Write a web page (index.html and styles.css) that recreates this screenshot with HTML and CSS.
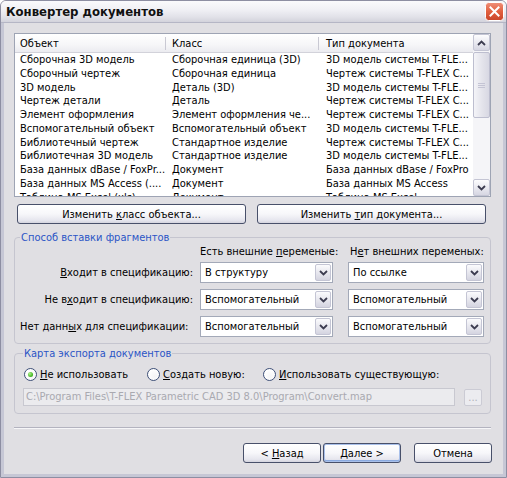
FILE: index.html
```html
<!DOCTYPE html>
<html lang="ru">
<head>
<meta charset="utf-8">
<title>Конвертер документов</title>
<link rel="stylesheet" href="styles.css">
</head>
<body>
<div class="window">
  <div class="titlebar">
    <span class="title">Конвертер документов</span>
    <span class="close">
      <svg width="19" height="19" viewBox="0 0 19 19">
        <defs>
          <linearGradient id="rg" x1="0" y1="0" x2="0" y2="1">
            <stop offset="0" stop-color="#f0907a"/>
            <stop offset="0.5" stop-color="#e2603f"/>
            <stop offset="1" stop-color="#c9452a"/>
          </linearGradient>
        </defs>
        <rect x="0.5" y="0.5" width="18" height="18" rx="3" fill="url(#rg)" stroke="#ffffff"/>
        <path d="M5.5 5.5 L13.5 13.5 M13.5 5.5 L5.5 13.5" stroke="#ffffff" stroke-width="2" stroke-linecap="square"/>
      </svg>
    </span>
  </div>
  <div class="client">
    <div class="listview">
      <div class="lv-main">
        <div class="lv-header">
          <div class="col c1">Объект</div>
          <div class="col c2">Класс</div>
          <div class="col c3">Тип документа</div>
        </div>
        <div class="lv-body">
          <div class="row"><div class="c1">Сборочная 3D модель</div><div class="c2">Сборочная единица (3D)</div><div class="c3">3D модель системы T-FLE...</div></div>
          <div class="row"><div class="c1">Сборочный чертеж</div><div class="c2">Сборочная единица</div><div class="c3">Чертеж системы T-FLEX C...</div></div>
          <div class="row"><div class="c1">3D модель</div><div class="c2">Деталь (3D)</div><div class="c3">3D модель системы T-FLE...</div></div>
          <div class="row"><div class="c1">Чертеж детали</div><div class="c2">Деталь</div><div class="c3">Чертеж системы T-FLEX C...</div></div>
          <div class="row"><div class="c1">Элемент оформления</div><div class="c2">Элемент оформления че...</div><div class="c3">Чертеж системы T-FLEX C...</div></div>
          <div class="row"><div class="c1">Вспомогательный объект</div><div class="c2">Вспомогательный объект</div><div class="c3">3D модель системы T-FLE...</div></div>
          <div class="row"><div class="c1">Библиотечный чертеж</div><div class="c2">Стандартное изделие</div><div class="c3">Чертеж системы T-FLEX C...</div></div>
          <div class="row"><div class="c1">Библиотечная 3D модель</div><div class="c2">Стандартное изделие</div><div class="c3">3D модель системы T-FLE...</div></div>
          <div class="row"><div class="c1">База данных dBase / FoxPr...</div><div class="c2">Документ</div><div class="c3">База данных dBase / FoxPro</div></div>
          <div class="row"><div class="c1">База данных MS Access (....</div><div class="c2">Документ</div><div class="c3">База данных MS Access</div></div>
          <div class="row"><div class="c1">Таблица MS Excel (xls)</div><div class="c2">Документ</div><div class="c3">Таблица MS Excel</div></div>
        </div>
      </div>
      <div class="vscroll">
        <div class="sb-btn"><svg width="9" height="6" viewBox="0 0 9 6"><path d="M1 5 L4.5 1.5 L8 5" fill="none" stroke="#3c3c50" stroke-width="1.8"/></svg></div>
        <div class="sb-track">
          <div class="sb-thumb">
            <svg width="7" height="7" viewBox="0 0 7 7"><path d="M0 1.5 H7 M0 3.5 H7 M0 5.5 H7" stroke="#c4c4d4" stroke-width="1"/></svg>
          </div>
        </div>
        <div class="sb-btn"><svg width="9" height="6" viewBox="0 0 9 6"><path d="M1 1 L4.5 4.5 L8 1" fill="none" stroke="#3c3c50" stroke-width="1.8"/></svg></div>
      </div>
    </div>

    <div class="btnrow">
      <button class="btn wide">Изменить <u>к</u>ласс объекта...</button>
      <button class="btn wide">Изменить <u>т</u>ип документа...</button>
    </div>

    <fieldset class="group g1">
      <legend>Способ вставки фрагментов</legend>
      <div class="colheads">
        <span class="ch1">Есть внешние <u>п</u>еременые:</span>
        <span class="ch2">Н<u>е</u>т внешних переменых:</span>
      </div>
      <div class="ins-grid">
        <div class="lbl"><u>В</u>ходит в спецификацию:</div>
        <div class="combo cb1"><span class="val">В структуру</span><span class="arrow"><svg width="9" height="6" viewBox="0 0 9 6"><path d="M1 1 L4.5 4.5 L8 1" fill="none" stroke="#3c3c50" stroke-width="1.8"/></svg></span></div>
        <div class="combo cb2"><span class="val">По ссылке</span><span class="arrow"><svg width="9" height="6" viewBox="0 0 9 6"><path d="M1 1 L4.5 4.5 L8 1" fill="none" stroke="#3c3c50" stroke-width="1.8"/></svg></span></div>

        <div class="lbl">Не в<u>х</u>одит в спецификацию:</div>
        <div class="combo cb1"><span class="val">Вспомогательный</span><span class="arrow"><svg width="9" height="6" viewBox="0 0 9 6"><path d="M1 1 L4.5 4.5 L8 1" fill="none" stroke="#3c3c50" stroke-width="1.8"/></svg></span></div>
        <div class="combo cb2"><span class="val">Вспомогательный</span><span class="arrow"><svg width="9" height="6" viewBox="0 0 9 6"><path d="M1 1 L4.5 4.5 L8 1" fill="none" stroke="#3c3c50" stroke-width="1.8"/></svg></span></div>

        <div class="lbl left">Нет данн<u>ы</u>х для спецификации:</div>
        <div class="combo cb1"><span class="val">Вспомогательный</span><span class="arrow"><svg width="9" height="6" viewBox="0 0 9 6"><path d="M1 1 L4.5 4.5 L8 1" fill="none" stroke="#3c3c50" stroke-width="1.8"/></svg></span></div>
        <div class="combo cb2"><span class="val">Вспомогательный</span><span class="arrow"><svg width="9" height="6" viewBox="0 0 9 6"><path d="M1 1 L4.5 4.5 L8 1" fill="none" stroke="#3c3c50" stroke-width="1.8"/></svg></span></div>
      </div>
    </fieldset>

    <fieldset class="group g2">
      <legend>Карта экспорта документов</legend>
      <div class="radios">
        <label class="radio r1"><span class="dot on"></span><span><u>Н</u>е использовать</span></label>
        <label class="radio r2"><span class="dot"></span><span><u>С</u>оздать новую:</span></label>
        <label class="radio r3"><span class="dot"></span><span><u>И</u>спользовать существующую:</span></label>
      </div>
      <div class="path-row">
        <div class="path">C:\Program Files\T-FLEX Parametric CAD 3D 8.0\Program\Convert.map</div>
        <button class="browse" disabled>...</button>
      </div>
    </fieldset>

    <div class="sep"></div>

    <div class="footer">
      <button class="btn nav">&lt; <u>Н</u>азад</button>
      <button class="btn nav default"><u>Д</u>алее &gt;</button>
      <button class="btn nav cancel">Отмена</button>
    </div>
  </div>
</div>
</body>
</html>
```

FILE: styles.css
```css
* { box-sizing: border-box; }

html, body {
  margin: 0;
  padding: 0;
  background: #ffffff;
}

body {
  font-family: "DejaVu Sans Condensed", "DejaVu Sans", sans-serif;
  font-stretch: semi-condensed;
  font-size: 11px;
  color: #000000;
}

u { text-decoration: underline; text-underline-offset: 1px; }

.window {
  width: 507px;
  height: 478px;
  display: flex;
  flex-direction: column;
  background: #e0dfe3;
  border: 1px solid #8d8ea2;
  border-radius: 6px 6px 0 0;
  overflow: hidden;
}

.titlebar {
  height: 22px;
  flex: none;
  display: flex;
  align-items: center;
  justify-content: space-between;
  padding: 0 2px 0 5px;
  background: linear-gradient(#fafafc 0%, #efeff4 45%, #e2e2e9 75%, #d3d3dc 100%);
  border-bottom: 1px solid #b5b6c5;
}

.title {
  font-weight: bold;
  font-size: 13px;
  color: #111111;
}

.close {
  display: flex;
  width: 19px;
  height: 19px;
}

.client {
  flex: 1;
  display: flex;
  flex-direction: column;
  border: 3px solid #c6c7d5;
  border-top: 0;
  padding: 10px 12px 0 10px;
}

/* list view */
.listview {
  height: 164px;
  flex: none;
  display: flex;
  border: 1px solid #9ea4b4;
  background: #ffffff;
}

.lv-main {
  flex: 1;
  min-width: 0;
  display: flex;
  flex-direction: column;
  overflow: hidden;
}

.lv-header {
  flex: none;
  display: flex;
  height: 19px;
  padding: 3px 0 2px;
  background: linear-gradient(#ffffff, #f6f6f8 60%, #ebebf0);
  border-bottom: 1px solid #d2d2da;
}

.lv-header .col {
  height: 13px;
  line-height: 13px;
  border-right: 1px solid #c9c9d3;
}

.lv-header .c3 { border-right: 0; }

.c1 { width: 151px; padding-left: 5px; flex: none; }
.c2 { width: 153px; padding-left: 6px; flex: none; }
.c3 { flex: 1; padding-left: 7px; min-width: 0; }

.lv-body {
  flex: 1;
  overflow: hidden;
}

.row {
  display: flex;
  height: 13.75px;
  line-height: 13.75px;
  white-space: nowrap;
}

.row > div { overflow: hidden; }

.vscroll {
  width: 17px;
  flex: none;
  display: flex;
  flex-direction: column;
  background: #f5f5f8;
}

.sb-btn {
  height: 17px;
  flex: none;
  display: flex;
  align-items: center;
  justify-content: center;
  border: 1px solid #c4c5d4;
  border-radius: 2px;
  background: linear-gradient(#fdfdfe, #e6e6ee 60%, #d6d6e2);
}

.sb-track {
  flex: 1;
  padding: 1px 0;
}

.sb-thumb {
  height: 66px;
  display: flex;
  align-items: center;
  justify-content: center;
  border: 1px solid #bdbecf;
  border-radius: 2px;
  background: linear-gradient(90deg, #f4f4f8, #e2e2ea 60%, #d8d8e3);
}

/* buttons */
.btnrow {
  display: flex;
  gap: 11px;
  margin-top: 7px;
  padding: 0 5px 0 3px;
}

.btn {
  height: 20px;
  padding: 0;
  font: inherit;
  color: #000000;
  border: 1px solid #48506a;
  border-radius: 3px;
  background: linear-gradient(#ffffff 0%, #f7f7fa 50%, #e6e6ee 85%, #d4d4de 100%);
}

.btn.wide { flex: 1; }

/* group boxes */
.group {
  margin: 7px 0 0;
  padding: 1px 6px 6px 5px;
  border: 1px solid #c5c5cf;
  border-radius: 4px;
  min-width: 0;
}

.group legend {
  padding: 0 1px;
  margin-left: 0;
  color: #2b55c6;
  line-height: 13px;
}

.colheads {
  display: flex;
  height: 13px;
  line-height: 13px;
  margin-bottom: 4px;
}

.ch1 { margin-left: 180px; width: 150px; }

.ins-grid {
  display: grid;
  grid-template-columns: 173px 133px 1fr;
  column-gap: 7px;
  row-gap: 6px;
}

.lbl {
  align-self: center;
  text-align: right;
  white-space: nowrap;
}

.lbl.left { text-align: left; }

.combo {
  height: 21px;
  display: flex;
  padding: 1px;
  border: 1px solid #a3a9b8;
  background: #ffffff;
}

.cb2 { margin-left: 8px; }

.combo .val {
  flex: 1;
  padding-left: 3px;
  line-height: 17px;
  white-space: nowrap;
  overflow: hidden;
}

.combo .arrow {
  width: 16px;
  display: flex;
  align-items: center;
  justify-content: center;
  border: 1px solid #c4c5d4;
  border-radius: 2px;
  background: linear-gradient(#fbfbfd, #e4e4ec 60%, #d4d4e0);
}

.g2 { margin-top: 3px; padding: 6px 8px 7px 8px; }

.radios {
  display: flex;
  align-items: center;
  height: 16px;
}

.radio {
  display: flex;
  align-items: center;
  gap: 3px;
  white-space: nowrap;
}

.r1 { width: 123px; margin-left: 1px; }
.r2 { width: 116px; }

.dot {
  width: 13px;
  height: 13px;
  flex: none;
  border: 1px solid #3e4f78;
  border-radius: 50%;
  background: radial-gradient(circle at 60% 65%, #f4f4f6 0%, #ffffff 70%);
  display: flex;
  align-items: center;
  justify-content: center;
}

.dot.on::before {
  content: "";
  width: 5px;
  height: 5px;
  border-radius: 50%;
  background: radial-gradient(circle at 35% 35%, #aef08a, #3db21d 70%, #2a8a12);
}

.path-row {
  display: flex;
  align-items: center;
  gap: 9px;
  margin-top: 6px;
}

.path {
  width: 432px;
  height: 18px;
  padding-left: 2px;
  line-height: 16px;
  color: #a9a9b0;
  background: #ebebee;
  border: 1px solid #c8c8d0;
  white-space: nowrap;
  overflow: hidden;
}

.browse {
  width: 18px;
  height: 17px;
  padding: 0;
  font: inherit;
  color: #b0b0b8;
  border: 1px solid #cbcbd4;
  border-radius: 2px;
  background: #ececf0;
}

.sep {
  height: 2px;
  margin-top: 13px;
  border-top: 1px solid #b3b3bf;
  border-bottom: 1px solid #f6f6f8;
}

.footer {
  display: flex;
  justify-content: flex-end;
  gap: 2px;
  margin-top: 14px;
  margin-right: -1px;
}

.btn.nav { width: 78px; }
.btn.cancel { margin-left: 11px; }

.btn.default {
  box-shadow: inset 0 0 0 1px #a9c0ea, inset 0 -1px 0 1px #8aaae0;
}
```
